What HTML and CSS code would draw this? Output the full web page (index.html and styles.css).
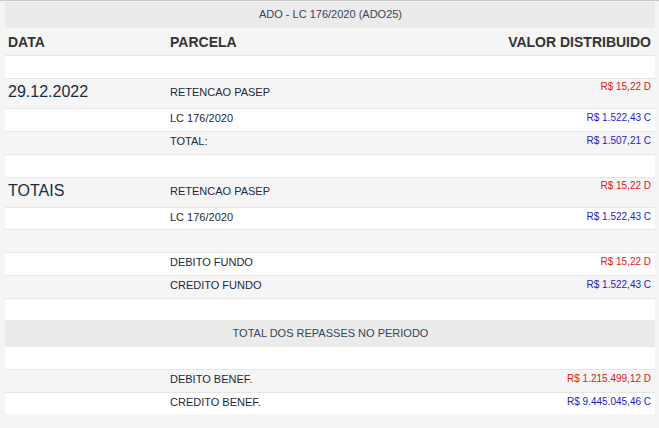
FILE: index.html
```html
<!DOCTYPE html>
<html>
<head>
<meta charset="utf-8">
<link rel="stylesheet" href="styles.css">
</head>
<body>
<div class="topline"></div>
<table class="grid">
  <colgroup><col class="c1"><col class="c2"><col class="c3"></colgroup>
  <tr class="title"><td colspan="3">ADO - LC 176/2020 (ADO25)</td></tr>
  <tr class="head"><th class="l first">DATA</th><th class="l">PARCELA</th><th class="r">VALOR DISTRIBUIDO</th></tr>
  <tr class="w"><td></td><td></td><td></td></tr>
  <tr class="g tall"><td class="date">29.12.2022</td><td>RETENCAO PASEP</td><td class="v deb">R$ 15,22 D</td></tr>
  <tr class="w"><td></td><td>LC 176/2020</td><td class="v cre">R$ 1.522,43 C</td></tr>
  <tr class="g"><td></td><td>TOTAL:</td><td class="v cre">R$ 1.507,21 C</td></tr>
  <tr class="w"><td></td><td></td><td></td></tr>
  <tr class="g tall"><td class="date">TOTAIS</td><td>RETENCAO PASEP</td><td class="v deb">R$ 15,22 D</td></tr>
  <tr class="w s"><td></td><td>LC 176/2020</td><td class="v cre">R$ 1.522,43 C</td></tr>
  <tr class="g"><td></td><td></td><td></td></tr>
  <tr class="w"><td></td><td>DEBITO FUNDO</td><td class="v deb">R$ 15,22 D</td></tr>
  <tr class="g"><td></td><td>CREDITO FUNDO</td><td class="v cre">R$ 1.522,43 C</td></tr>
  <tr class="w s"><td></td><td></td><td></td></tr>
  <tr class="title t2"><td colspan="3">TOTAL DOS REPASSES NO PERIODO</td></tr>
  <tr class="w"><td></td><td></td><td></td></tr>
  <tr class="g"><td></td><td>DEBITO BENEF.</td><td class="v deb">R$ 1.215.499,12 D</td></tr>
  <tr class="w s"><td></td><td>CREDITO BENEF.</td><td class="v cre">R$ 9.445.045,46 C</td></tr>
</table>
</body>
</html>
```
FILE: styles.css
```css
html, body {
  margin: 0;
  padding: 0;
  background: #f5f5f5;
  font-family: "Liberation Sans", Arial, sans-serif;
  color: #1b2a3d;
}
.topline {
  height: 1px;
  background: #c8c8c8;
  margin-bottom: 1px;
}
.grid {
  margin-left: 5px;
  width: 650px;
  border-collapse: collapse;
  table-layout: fixed;
}
.c1 { width: 160px; }
.c2 { width: 208px; }
.c3 { width: 282px; }
.grid td, .grid th {
  padding: 0 4px 3px 5px;
  font-size: 11px;
  line-height: 13px;
  height: 19px;
  vertical-align: middle;
  border-top: 1px solid #e6e6e6;
  white-space: nowrap;
}
.grid .s td { height: 18px; }
.grid .title td {
  background: #ebebeb;
  text-align: center;
  color: #34465c;
  height: 24px;
  padding-top: 0;
  padding-bottom: 2px;
  border-top: none;
}
.grid .t2 td { height: 24px; padding-top: 1px; padding-bottom: 1px; }
.grid .head th {
  background: #f5f5f5;
  font-size: 14px;
  line-height: 16px;
  font-weight: bold;
  color: #333333;
  height: 27px;
  padding-bottom: 0;
  border-top: none;
  padding-left: 5px;
}
.grid .head th.first { padding-left: 3px; }
.head th.l { text-align: left; }
.grid .head th.r { text-align: right; padding-right: 4px; }
.w td { background: #ffffff; }
.g td { background: #f5f5f5; }
.grid .tall td { height: 26px; }
.grid td.date {
  font-size: 16px;
  line-height: 18px;
  padding-left: 3px;
}
.grid td.v {
  text-align: right;
  vertical-align: top;
  font-size: 10px;
  line-height: 12px;
  padding-top: 3px;
  padding-bottom: 0;
  height: 19px;
}
.grid .s td.v { height: 18px; }
.grid .tall td.v { padding-top: 2px; height: 27px; }
.deb { color: #e01515; }
.cre { color: #1c1cc8; }
```
